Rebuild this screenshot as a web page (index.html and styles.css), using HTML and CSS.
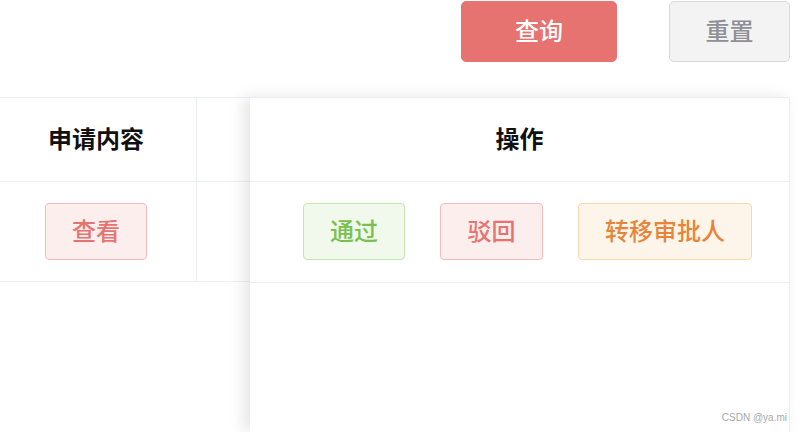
FILE: index.html
```html
<!DOCTYPE html>
<html lang="zh">
<head>
<meta charset="utf-8">
<link rel="stylesheet" href="styles.css">
</head>
<body>
<div class="toolbar">
  <button class="btn btn-primary">查询</button>
  <button class="btn btn-reset">重置</button>
</div>
<div class="table-wrap">
  <div class="table-main">
    <div class="row head">
      <div class="cell c1">申请内容</div>
      <div class="cell c2"></div>
    </div>
    <div class="row body">
      <div class="cell c1"><span class="tag tag-red w102">查看</span></div>
      <div class="cell c2"></div>
    </div>
  </div>
  <div class="table-fixed">
    <div class="row head">
      <div class="cell cf">操作</div>
    </div>
    <div class="row body">
      <div class="cell cf ops">
        <span class="tag tag-green w102">通过</span>
        <span class="tag tag-red w103">驳回</span>
        <span class="tag tag-orange w174">转移审批人</span>
      </div>
    </div>
  </div>
  <div class="watermark">CSDN @ya.mi</div>
</div>
</body>
</html>
```
FILE: styles.css
```css
* { box-sizing: border-box; }
html, body { margin: 0; padding: 0; background: #fff; }
body {
  width: 802px;
  height: 432px;
  overflow: hidden;
  font-family: "Noto Sans CJK SC", "Noto Sans", sans-serif;
}
.toolbar {
  display: flex;
  justify-content: flex-end;
  gap: 52px;
  padding: 1px 12px 0 0;
  height: 97px;
}
.btn {
  height: 61px;
  border-radius: 5px;
  font-family: inherit;
  font-size: 24px;
  font-weight: 500;
  line-height: 1;
  padding: 0 0 4px;
  cursor: pointer;
}
.btn-primary {
  width: 156px;
  background: #e6736f;
  border: 1px solid #e6736f;
  color: #fff;
}
.btn-reset {
  width: 121px;
  background: #f3f3f3;
  border: 1px solid #d9d9d9;
  color: #8e9096;
}
.table-wrap {
  position: relative;
  height: 335px;
}
.table-main { width: 790px; }
.row {
  display: flex;
  border-top: 1px solid #ebeef5;
}
.row.head { height: 84px; }
.row.body { height: 101px; border-bottom: 1px solid #ebeef5; }
.cell {
  display: flex;
  align-items: center;
  justify-content: center;
  font-size: 24px;
}
.head .cell {
  font-weight: 700;
  color: #111;
  padding-bottom: 5px;
}
.c1 { width: 197px; border-right: 1px solid #ebeef5; padding-right: 4px; }
.c2 { flex: 1; }
.table-fixed {
  position: absolute;
  top: 0;
  left: 250px;
  width: 540px;
  bottom: 0;
  background: #fff;
  border-right: 1px solid #ebeef5;
  box-shadow: -6px 0 14px rgba(0, 0, 0, 0.10);
}
.table-fixed .row.body { height: 102px; }
.cf { width: 100%; }
.ops {
  justify-content: flex-start;
  padding-left: 53px;
  padding-bottom: 2px;
  gap: 35px;
}
.tag {
  display: inline-flex;
  align-items: center;
  justify-content: center;
  height: 57px;
  border-radius: 4px;
  border: 1px solid;
  font-size: 24px;
  font-weight: 500;
  padding-bottom: 4px;
}
.w102 { width: 102px; }
.w103 { width: 103px; }
.w174 { width: 174px; }
.tag-red { background: #fdeeee; border-color: #f5baba; color: #e6736f; }
.tag-green { background: #f0f9eb; border-color: #c2e7b0; color: #78c04f; }
.tag-orange { background: #fdf5ea; border-color: #f5d9b1; color: #e6853a; }
.watermark {
  position: absolute;
  right: 15px;
  bottom: 9px;
  font-family: "Liberation Sans", Arial, sans-serif;
  font-size: 10px;
  color: #a8a8a8;
}
```
